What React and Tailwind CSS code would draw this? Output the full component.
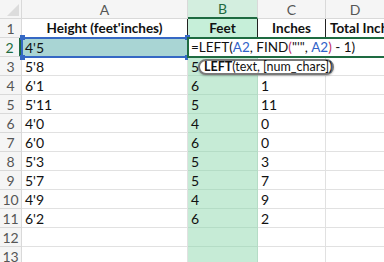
import React from 'react';

// C3 sits under the function tooltip, so it is left blank
const rows = [
    ['5\'8', '5', ''],
    ['6\'1', '6', '1'],
    ['5\'11', '5', '11'],
    ['4\'0', '4', '0'],
    ['6\'0', '6', '0'],
    ['5\'3', '5', '3'],
    ['5\'7', '5', '7'],
    ['4\'9', '4', '9'],
    ['6\'2', '6', '2'],
    ['', '', ''],
    ['', '', ''],
];

const font = { fontFamily: 'Lato, "Open Sans", sans-serif' };

function RowHead({ n, active }) {
    return (
        <div
            className={`h-[19px] flex items-center justify-center border-r border-b border-[#d9d9d9] bg-[#f5f5f5] text-[14px] ${active ? 'text-[#1e6b41] border-r-[3px] border-r-[#1e6b41]' : 'text-[#555]'}`}
        >
            {n}
        </div>
    );
}

export default function App() {
    return (
        <div className="w-[384px] h-[262px] overflow-hidden bg-white text-[#111]" style={font}>
            <div className="grid grid-cols-[22px_166px_70px_68px_1fr]">
                {/* column headers */}
                <div className="h-[19px] border-r border-b border-[#d9d9d9] bg-[#f5f5f5] relative">
                    <div className="absolute right-[2px] bottom-[2px] w-0 h-0 border-l-[12px] border-l-transparent border-b-[12px] border-b-[#dcdcdc]" />
                </div>
                <div className="h-[19px] flex items-center justify-center border-r border-b border-[#d9d9d9] bg-[#f5f5f5] text-[14px] text-[#555]">A</div>
                <div className="h-[19px] flex items-center justify-center border-r border-b-2 border-r-[#d9d9d9] border-b-[#1e6b41] bg-[#d3eedf] text-[14px] text-[#1e6b41]">B</div>
                <div className="h-[19px] flex items-center justify-center border-r border-b border-[#d9d9d9] bg-[#f5f5f5] text-[14px] text-[#555]">C</div>
                <div className="h-[19px] flex items-center justify-center border-b border-[#d9d9d9] bg-[#f5f5f5] text-[14px] text-[#555]">D</div>

                {/* row 1 */}
                <RowHead n={1} />
                <div className="h-[19px] flex items-center justify-center border-r border-b border-[#222] text-[13.5px] font-bold">Height (feet'inches)</div>
                <div className="h-[19px] flex items-center justify-center border-r border-b border-[#222] bg-[#c6efd9] text-[13.5px] font-bold">Feet</div>
                <div className="h-[19px] flex items-center justify-center border-r border-b border-[#222] text-[13.5px] font-bold">Inches</div>
                <div className="h-[19px] flex items-center pl-[4px] border-b border-[#222] text-[13.5px] font-bold whitespace-nowrap overflow-hidden">Total Inches</div>

                {/* row 2 */}
                <RowHead n={2} active />
                <div className="h-[19px] relative bg-[#a9d5d4] flex items-center pl-[3px] text-[14px] text-[#111]">
                    4'5
                    <div className="absolute -left-[1px] -top-[1px] -right-[1px] -bottom-[1px] border-2 border-[#3568c4]" />
                    <div className="absolute -left-[2px] -top-[3px] w-[5px] h-[5px] bg-[#3568c4]" />
                    <div className="absolute -right-[2px] -top-[3px] w-[5px] h-[5px] bg-[#3568c4]" />
                    <div className="absolute -left-[2px] -bottom-[3px] w-[5px] h-[5px] bg-[#3568c4]" />
                    <div className="absolute -right-[2px] -bottom-[3px] w-[5px] h-[5px] bg-[#3568c4]" />
                </div>
                <div className="col-span-3 h-[19px] relative bg-white flex items-center pl-[3px] text-[13.5px] whitespace-nowrap z-10">
                    <div className="absolute -left-[1px] -top-[1px] -right-[4px] -bottom-[1px] border-2 border-[#1e6b41]" />
                    <span>=LEFT(</span>
                    <span className="text-[#3163c9]">A2</span>
                    <span>, FIND</span>
                    <span className="text-[#c2306a]">(</span>
                    <span>"'"</span>
                    <span>,&nbsp;</span>
                    <span className="text-[#3163c9]">A2</span>
                    <span className="text-[#c2306a]">)</span>
                    <span>&nbsp;- 1)</span>
                </div>

                {/* rows 3+ */}
                {rows.map((r, i) => (
                    <React.Fragment key={i}>
                        <RowHead n={i + 3} />
                        <div className="h-[19px] flex items-center pl-[3px] border-r border-b border-[#e1e1e1] text-[14px]">{r[0]}</div>
                        <div className="h-[19px] relative flex items-center pl-[3px] border-r border-b border-[#b5dcc6] bg-[#c6ebd6] text-[14px]">
                            {r[1]}
                            {i === 0 && (
                                <div className="absolute left-[10px] top-[2px] w-[136px] h-[16px] rounded-full border-2 border-[#7a7a7a] bg-white flex items-center pl-[4px] text-[12.5px] whitespace-nowrap shadow-[0_1px_2px_rgba(0,0,0,0.25)] z-20">
                                    <span className="font-bold">LEFT</span>
                                    <span>(text, [num_chars])</span>
                                </div>
                            )}
                        </div>
                        <div className="h-[19px] flex items-center pl-[3px] border-r border-b border-[#e1e1e1] text-[14px]">{r[2]}</div>
                        <div className="h-[19px] border-b border-[#e1e1e1]" />
                    </React.Fragment>
                ))}
            </div>
        </div>
    );
}
